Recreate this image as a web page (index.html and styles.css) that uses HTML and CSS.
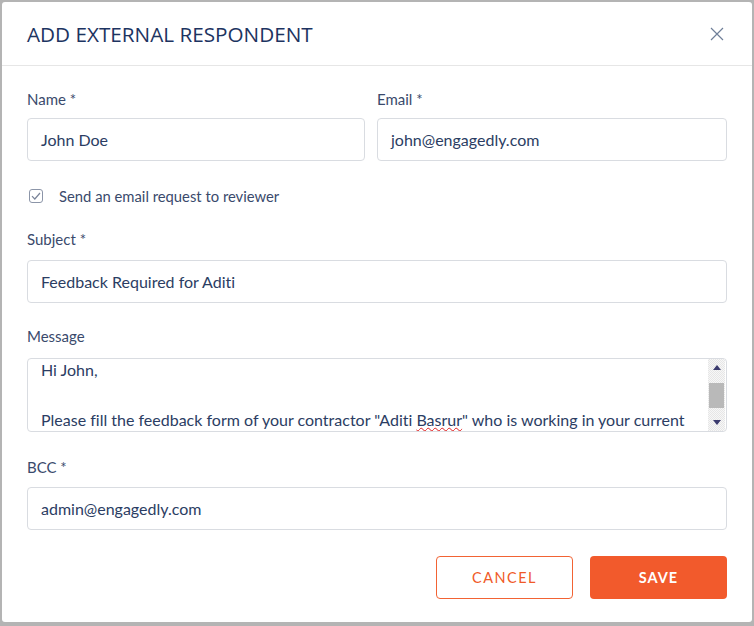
FILE: index.html
```html
<!DOCTYPE html>
<html>
<head>
<meta charset="utf-8">
<link rel="stylesheet" href="styles.css">
</head>
<body>
<div class="modal">
  <div class="header">
    <h1 class="title">ADD EXTERNAL RESPONDENT</h1>
    <svg class="close" width="14" height="14" viewBox="0 0 14 14"><path d="M1 1L13 13M13 1L1 13" stroke="#6f7f99" stroke-width="1.2" fill="none"/></svg>
  </div>
  <div class="body">
    <div class="row2">
      <div class="field">
        <div class="label lb-top">Name *</div>
        <div class="input">John Doe</div>
      </div>
      <div class="field">
        <div class="label lb-top">Email *</div>
        <div class="input">john@engagedly.com</div>
      </div>
    </div>
    <div class="check-row">
      <span class="checkbox"><svg width="10" height="8" viewBox="0 0 10 8"><path d="M1 4.2L3.8 7L9 1" stroke="#7a8499" stroke-width="1.2" fill="none"/></svg></span>
      <span class="check-text">Send an email request to reviewer</span>
    </div>
    <div class="field f-subject">
      <div class="label lb-subject">Subject *</div>
      <div class="input">Feedback Required for Aditi</div>
    </div>
    <div class="field f-message">
      <div class="label lb-message">Message</div>
      <div class="textarea">
        <div class="ta-text">
          <div class="ta-line">Hi John,</div>
          <div class="ta-line"></div>
          <div class="ta-line">Please fill the feedback form of your contractor "Aditi <span class="spell">Basrur</span>" who is working in your current</div>
        </div>
        <div class="scrollbar">
          <div class="sb-btn"><span class="tri-up"></span></div>
          <div class="sb-track"><div class="sb-thumb"></div></div>
          <div class="sb-btn"><span class="tri-down"></span></div>
        </div>
      </div>
    </div>
    <div class="field f-bcc">
      <div class="label lb-bcc">BCC *</div>
      <div class="input">admin@engagedly.com</div>
    </div>
    <div class="footer">
      <button class="btn btn-cancel">CANCEL</button>
      <button class="btn btn-save">SAVE</button>
    </div>
  </div>
</div>
</body>
</html>
```

FILE: styles.css
```css
* { box-sizing: border-box; }
html, body { margin: 0; padding: 0; }
body {
  background: #b4b4b4;
  width: 754px;
  height: 626px;
  overflow: hidden;
  font-family: "Lato", "Liberation Sans", sans-serif;
  font-variant-ligatures: none;
}
.modal {
  margin: 2px 0 0 2px;
  width: 750px;
  height: 620px;
  background: #ffffff;
  border-radius: 3px;
}
.header {
  height: 64px;
  border-bottom: 1px solid #e6e6e6;
  display: flex;
  align-items: center;
  justify-content: space-between;
  padding: 0 28px 0 25px;
}
.title {
  margin: 0;
  font-family: "Open Sans", "Liberation Sans", sans-serif;
  font-weight: 500;
  font-size: 20.7px;
  color: #1d3461;
  letter-spacing: 0;
}
.close { display: block; }
.body {
  padding: 23px 25px 0 25px;
}
.row2 {
  display: grid;
  grid-template-columns: 338px 350px;
  column-gap: 12px;
}
.label {
  font-size: 15px;
  line-height: 20px;
  color: #3a4a6c;
}
.lb-top { margin-bottom: 9px; }
.lb-subject { margin-bottom: 11px; }
.lb-message { margin-bottom: 12px; }
.lb-bcc { margin-bottom: 10px; }
.input {
  height: 43px;
  border: 1px solid #d9dce1;
  border-radius: 4px;
  padding: 0 13px;
  display: flex;
  align-items: center;
  font-size: 16px;
  color: #2b3d63;
}
.check-row {
  margin-top: 25px;
  height: 20px;
  display: flex;
  align-items: center;
  padding-left: 2px;
}
.checkbox {
  width: 14px;
  height: 14px;
  border: 1px solid #8c95a8;
  border-radius: 3px;
  display: flex;
  align-items: center;
  justify-content: center;
}
.check-text {
  margin-left: 16px;
  font-size: 14.8px;
  color: #3a4a6c;
}
.f-subject { margin-top: 23px; }
.f-message { margin-top: 23px; }
.f-bcc { margin-top: 25px; }
.textarea {
  height: 74px;
  border: 1px solid #d9dce1;
  border-radius: 4px;
  display: flex;
  overflow: hidden;
}
.ta-text {
  flex: 1;
  overflow: hidden;
  padding: 0 13px;
  margin-top: -2px;
  font-size: 16px;
  line-height: 25px;
  color: #2b3d63;
  white-space: nowrap;
}
.ta-line { height: 25px; }
.spell {
  text-decoration: underline wavy #e02020;
  text-decoration-thickness: 1px;
  text-decoration-skip-ink: none;
  text-underline-offset: 1px;
}
.scrollbar {
  width: 17px;
  margin-right: 1px;
  display: flex;
  flex-direction: column;
  background: repeating-conic-gradient(#e6e6e6 0 25%, #f7f7f7 0 50%) 0 0 / 2px 2px;
}
.sb-btn {
  height: 17px;
  display: flex;
  align-items: center;
  justify-content: center;
}
.tri-up, .tri-down {
  width: 0; height: 0;
  border-left: 4px solid transparent;
  border-right: 4px solid transparent;
}
.tri-up { border-bottom: 5px solid #3b3b6e; }
.tri-down { border-top: 5px solid #3b3b6e; }
.sb-track {
  flex: 1;
  padding-top: 7px;
}
.sb-thumb {
  height: 25px;
  margin: 0 1px;
  background: #b9b9b9;
}
.footer {
  margin-top: 26px;
  display: flex;
  justify-content: flex-end;
  gap: 17px;
}
.btn {
  width: 137px;
  height: 43px;
  border-radius: 4px;
  font-family: "Lato", "Liberation Sans", sans-serif;
  font-size: 14.5px;
  letter-spacing: 1.5px;
  cursor: pointer;
}
.btn-cancel {
  background: #ffffff;
  border: 1px solid #f26334;
  color: #f05a28;
}
.btn-save {
  background: #f25a2c;
  border: none;
  color: #ffffff;
  font-weight: 700;
  letter-spacing: 1px;
}
```
